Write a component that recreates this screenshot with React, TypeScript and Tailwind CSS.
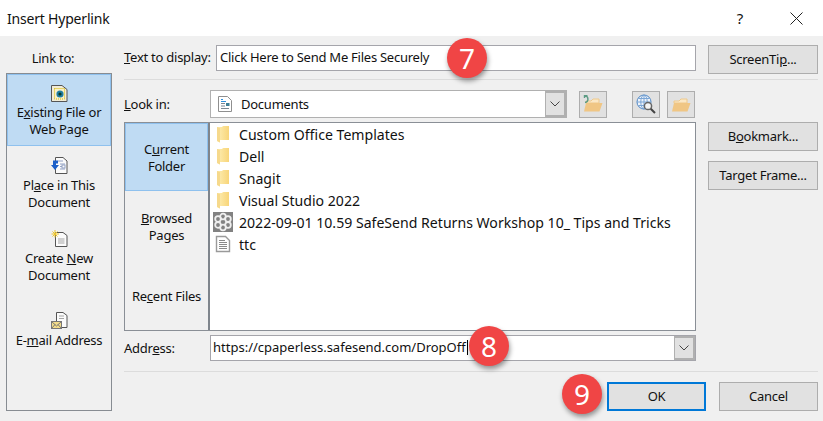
import type { ReactNode } from "react";

function Folder() {
  return (
    <svg width="14" height="18" viewBox="0 0 14 18" className="shrink-0">
      <defs>
        <linearGradient id="fold" x1="0" y1="0" x2="1" y2="0">
          <stop offset="0" stopColor="#fdeeb4" />
          <stop offset="1" stopColor="#f8d579" />
        </linearGradient>
      </defs>
      <path d="M1 2 L6 2 L7 1 L13 1 L13 15 L4 15 L4 17.5 L1 16 Z" fill="url(#fold)" />
      <path d="M1 2 L4 3 L4 17.5 L1 16 Z" fill="#f6d98c" />
    </svg>
  );
}

function DocIcon() {
  return (
    <svg width="16" height="18" viewBox="0 0 16 18" className="shrink-0">
      <path d="M1.5 1.5 H10.5 L14.5 5.5 V16.5 H1.5 Z" fill="#fff" stroke="#9a9a9a" strokeWidth="1.4" />
      <path d="M4 5.5 H10 M4 7.5 H12 M4 9.5 H12 M4 11.5 H12 M4 13.5 H12" stroke="#8a8a8a" />
    </svg>
  );
}

function LookInDoc() {
  return (
    <svg width="16" height="18" viewBox="0 0 16 18" className="shrink-0">
      <path d="M1.5 1.5 H10.5 L14.5 5.5 V16.5 H1.5 Z" fill="#fff" stroke="#8f8f8f" />
      <path d="M4 4.5 H6 M4 6.5 H9" stroke="#2f8fdc" />
      <path d="M4 8.5 H8 M4 11 H8 M4 13.5 H12" stroke="#7a8794" />
      <rect x="9" y="8" width="3.5" height="3" fill="#3f7f96" />
    </svg>
  );
}

function FlowerIcon() {
  return (
    <svg width="20" height="20" viewBox="0 0 20 20" className="shrink-0">
      <rect width="20" height="20" fill="#828282" />
      {[[10, 4.5], [15, 7], [15, 13], [10, 15.5], [5, 13], [5, 7]].map(([cx, cy]) => (
        <circle key={`${cx}-${cy}`} cx={cx} cy={cy} r="2.8" fill="#828282" stroke="#efefef" strokeWidth="1.8" />
      ))}
    </svg>
  );
}

function ExistingIcon() {
  return (
    <svg width="17" height="17" viewBox="0 0 17 17">
      <path d="M0.5 0.5 H11 L16 4.5 V16.5 H0.5 Z" fill="#f1ecd6" stroke="#555" />
      <rect x="3.5" y="3.5" width="10" height="10.5" fill="#f6f0c8" stroke="#d8b800" strokeDasharray="1 1" />
      <circle cx="9" cy="9" r="3.6" fill="#1f7ea3" />
      <circle cx="9" cy="9" r="1.6" fill="#0a3a20" />
    </svg>
  );
}

function PlaceIcon() {
  return (
    <svg width="17" height="17" viewBox="0 0 17 17">
      <path d="M4.5 0.5 H12 L16 4 V16.5 H4.5 Z" fill="#fbfbfb" stroke="#555" />
      <path d="M7 4 H12 M9 7 H14 M9 9.5 H11 M9 12 H14" stroke="#93a2c4" />
      <rect x="11" y="8" width="3" height="3" fill="none" stroke="#93a2c4" />
      <path d="M2 3.5 V8 H0 L4 13 L8 8 H5 V6.5 H7 V3.5 Z" fill="#1b5fc9" />
    </svg>
  );
}

function CreateIcon() {
  return (
    <svg width="17" height="17" viewBox="0 0 17 17">
      <path d="M4.5 2.5 H12 L16 5.5 V16.5 H4.5 Z" fill="#fbfbfb" stroke="#555" />
      <path d="M7 9 H13.5 M7 11 H13.5 M7 13 H13.5" stroke="#a5a5a5" />
      <path d="M4 0 V7.5 M0.5 4 H8 M1.5 1.5 L6.5 6.5 M6.5 1.5 L1.5 6.5" stroke="#efc62a" />
    </svg>
  );
}

function MailIcon() {
  return (
    <svg width="17" height="17" viewBox="0 0 17 17">
      <path d="M5.5 0.5 H12 L16 3.5 V15.5 H5.5 Z" fill="#fbfbfb" stroke="#555" />
      <path d="M8 4 H13 M8 6.5 H13" stroke="#a5a5a5" />
      <rect x="0.5" y="9.5" width="10" height="7" fill="#f3dc8a" stroke="#777" />
      <path d="M0.5 9.5 L5.5 14 L10.5 9.5 M0.5 16.5 L4 12.5 M10.5 16.5 L7 12.5" fill="none" stroke="#777" />
    </svg>
  );
}

function OpenFolder({ back }: { back?: boolean }) {
  return (
    <svg width="20" height="18" viewBox="0 0 20 18">
      <path d="M3 6 H8 L10 4 H16 V8 H3 Z" fill="#fbe8c6" stroke="#eec98c" />
      <path d="M1 16.5 L3 8 H19.5 L16.5 16.5 Z" fill="#f0c684" />
      {back && <path d="M4.5 0.5 H1.5 V3 M1.5 0.5 C6 1 6 7 2 7.5" fill="none" stroke="#5c9b84" strokeWidth="1.4" />}
    </svg>
  );
}

function WebSearchIcon() {
  return (
    <svg width="20" height="20" viewBox="0 0 20 20">
      <circle cx="8" cy="8" r="7" fill="#eef3fa" stroke="#4f86c4" />
      <path d="M1 8 H15 M8 1 V15 M2.5 4.5 H13.5 M2.5 11.5 H13.5" stroke="#7ba6d6" fill="none" />
      <ellipse cx="8" cy="8" rx="3.2" ry="7" fill="none" stroke="#7ba6d6" />
      <circle cx="12" cy="12" r="3.6" fill="#f4f4f4" stroke="#666" strokeWidth="1.5" />
      <path d="M14.7 14.7 L19 19" stroke="#444" strokeWidth="2" />
    </svg>
  );
}

function Chevron() {
  return (
    <svg width="10" height="6" viewBox="0 0 10 6">
      <path d="M0.5 0.5 L5 5 L9.5 0.5" fill="none" stroke="#444" />
    </svg>
  );
}

function Badge({ n, className }: { n: number; className: string }) {
  return (
    <div
      className={`absolute flex h-10 w-10 items-center justify-center rounded-full bg-[#f04545] text-[28px] tracking-normal text-white shadow-[1px_3px_5px_rgba(0,0,0,0.4)] ${className}`}
    >
      {n}
    </div>
  );
}

function SideButton({ className, children }: { className: string; children: ReactNode }) {
  return (
    <button className={`flex items-center justify-center border border-[#adadad] bg-[#e1e1e1] ${className}`}>
      {children}
    </button>
  );
}

function Row({ icon, label }: { icon: ReactNode; label: string }) {
  return (
    <div className="flex h-[22px] items-center">
      <div className="flex w-[28px] shrink-0 items-center justify-center pr-[4px]">{icon}</div>
      <span className="whitespace-nowrap">{label}</span>
    </div>
  );
}

export default function App() {
  return (
    <div className="relative flex h-[421px] w-[823px] flex-col overflow-hidden bg-[#f0f0f0] font-['Noto_Sans','Open_Sans',sans-serif] text-[13px] leading-[17px] tracking-[-0.25px] text-[#111]">
      {/* title bar */}
      <div className="flex h-9 shrink-0 items-center bg-white pl-[7px] text-[14px] tracking-[-0.2px]">
        <span>Insert Hyperlink</span>
        <span className="ml-auto mr-[47px] text-[15px]">?</span>
        <svg width="13" height="13" viewBox="0 0 13 13" className="mr-[20px]">
          <path d="M0.5 0.5 L12.5 12.5 M12.5 0.5 L0.5 12.5" stroke="#222" />
        </svg>
      </div>

      <div className="flex flex-1 pl-[6px]">
        {/* link to */}
        <div className="flex w-[106px] shrink-0 flex-col">
          <div className="mt-[14px] h-[23px] pr-[12px] text-center">Link to:</div>
          <div className="flex h-[338px] flex-col border border-[#878c92] text-center">
            <div className="flex h-[72px] flex-col items-center border border-[#8fc1ee] bg-[#bfdbf3] pt-[10px]">
              <ExistingIcon />
              <div className="mt-[2px]">E<u>x</u>isting File or<br />Web Page</div>
            </div>
            <div className="flex h-[73px] flex-col items-center pt-[11px]">
              <PlaceIcon />
              <div className="mt-[3px]">Pl<u>a</u>ce in This<br />Document</div>
            </div>
            <div className="flex h-[82px] flex-col items-center pt-[11px]">
              <CreateIcon />
              <div className="mt-[3px]">Create <u>N</u>ew<br />Document</div>
            </div>
            <div className="flex flex-col items-center pt-[11px]">
              <MailIcon />
              <div className="mt-[3px]">E-<u>m</u>ail Address</div>
            </div>
          </div>
        </div>

        {/* main area */}
        <div className="ml-[12px] flex w-[694px] shrink-0 flex-col pt-[9px]">
          <div className="flex items-start">
            <div className="mt-[4px] w-[92px] whitespace-nowrap"><u>T</u>ext to display:</div>
            <div className="flex h-[26px] w-[480px] items-center border border-[#a5a5ab] bg-white pb-[2px] pl-[3px]">
              Click Here to Send Me Files Securely
            </div>
            <SideButton className="ml-[12px] h-[29px] w-[110px]">ScreenTi<u>p</u>...</SideButton>
          </div>
          <div className="mt-[5px] h-px bg-[#dcdcdc]" />

          <div className="mt-[10px] flex">
            <div className="flex w-[572px] flex-col">
              <div className="flex h-[28px] items-center">
                <div className="w-[86px]"><u>L</u>ook in:</div>
                <div className="flex h-full w-[357px] border border-[#b0b0b0] bg-white">
                  <div className="flex flex-1 items-center pl-[6px]">
                    <LookInDoc />
                    <span className="ml-[8px]">Documents</span>
                  </div>
                  <div className="flex w-[21px] items-center justify-center border-2 border-l border-[#b0b0b0] bg-[#e1e1e1]">
                    <Chevron />
                  </div>
                </div>
                <SideButton className="ml-[12px] h-[27px] w-[28px]"><OpenFolder back /></SideButton>
                <SideButton className="ml-[25px] h-[27px] w-[28px]"><WebSearchIcon /></SideButton>
                <SideButton className="ml-[7px] h-[27px] w-[28px]"><OpenFolder /></SideButton>
              </div>

              <div className="mt-[4px] flex h-[209px] border border-[#8a8f96]">
                <div className="flex w-[85px] shrink-0 flex-col border-r-2 border-[#7f858c] text-center">
                  <div className="flex h-[68px] items-center justify-center border border-[#8fc1ee] bg-[#bfdbf3] pt-[2px]">
                    <div>C<u>u</u>rrent<br />Folder</div>
                  </div>
                  <div className="flex h-[72px] items-center justify-center">
                    <div><u>B</u>rowsed<br />Pages</div>
                  </div>
                  <div className="flex h-[67px] items-center justify-center">
                    <div>Re<u>c</u>ent Files</div>
                  </div>
                </div>
                <div className="flex-1 bg-white pl-[1px] text-[14.1px] tracking-normal">
                  <Row icon={<Folder />} label="Custom Office Templates" />
                  <Row icon={<Folder />} label="Dell" />
                  <Row icon={<Folder />} label="Snagit" />
                  <Row icon={<Folder />} label="Visual Studio 2022" />
                  <Row icon={<FlowerIcon />} label="2022-09-01 10.59 SafeSend Returns Workshop 10_ Tips and Tricks" />
                  <Row icon={<DocIcon />} label="ttc" />
                </div>
              </div>

              <div className="mt-[4px] flex h-[26px] items-center">
                <div className="w-[86px]">Addr<u>e</u>ss:</div>
                <div className="flex h-full w-[486px] border border-[#a5a5ab] bg-white">
                  <div className="flex flex-1 items-center pb-[2px] pl-[2px] tracking-normal">
                    <span>https://cpaperless.safesend.com/DropOff</span>
                    <span className="ml-px h-[15px] w-px bg-black" />
                  </div>
                  <div className="flex w-[21px] items-center justify-center border-2 border-l border-[#b0b0b0] bg-[#e1e1e1]">
                    <Chevron />
                  </div>
                </div>
              </div>
            </div>

            <div className="ml-[12px] flex w-[110px] flex-col gap-[10px] pt-[32px]">
              <SideButton className="h-[29px] w-full">B<u>o</u>okmark...</SideButton>
              <SideButton className="h-[29px] w-full">Tar<u>g</u>et Frame...</SideButton>
            </div>
          </div>

          <div className="mt-[10px] h-px bg-[#dcdcdc]" />

          <div className="mt-[10px] flex justify-end gap-[13px]">
            <SideButton className="h-[29px] w-[99px] border-2 !border-[#0078d7]">OK</SideButton>
            <SideButton className="h-[29px] w-[99px]">Cancel</SideButton>
          </div>
        </div>
      </div>

      <Badge n={7} className="left-[447px] top-[38px]" />
      <Badge n={8} className="left-[469px] top-[326px]" />
      <Badge n={9} className="left-[562px] top-[374px]" />
    </div>
  );
}
